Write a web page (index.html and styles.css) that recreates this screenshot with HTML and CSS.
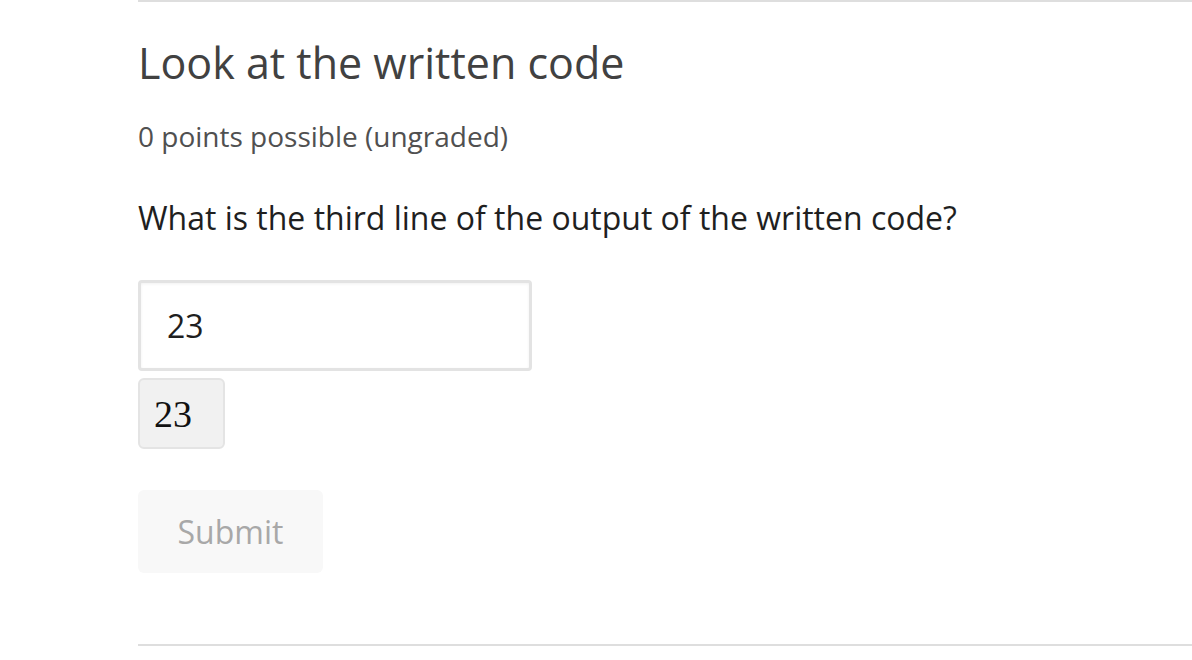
FILE: index.html
```html
<!DOCTYPE html>
<html lang="en">
<head>
<meta charset="utf-8">
<title>Problem</title>
<link rel="stylesheet" href="styles.css">
</head>
<body>
<main class="problem">
  <h2 class="problem-title">Look at the written code</h2>
  <div class="points">0 points possible (ungraded)</div>
  <p class="question">What is the third line of the output of the written code?</p>
  <div class="answer">
    <input class="answer-input" type="text" value="23">
    <div class="preview"><span class="math">23</span></div>
  </div>
  <div class="actions">
    <button class="submit" type="button" disabled>Submit</button>
  </div>
</main>
</body>
</html>
```
FILE: styles.css
```css
html, body {
  margin: 0;
  padding: 0;
  background: #fff;
}
body {
  font-family: "Open Sans", "Liberation Sans", sans-serif;
  overflow: hidden;
}
.problem {
  margin-left: 138px;
  border-top: 2px solid #dedede;
  border-bottom: 2px solid #dedede;
  height: 642px;
  box-sizing: content-box;
  display: flex;
  flex-direction: column;
  align-items: flex-start;
}
.problem-title {
  margin: 33px 0 0 0;
  font-size: 43px;
  font-weight: 400;
  line-height: 56px;
  color: #414141;
}
.points {
  margin-top: 27px;
  font-size: 28px;
  line-height: 36px;
  color: #505050;
}
.question {
  margin: 44px 0 0 0;
  font-size: 32px;
  line-height: 40px;
  color: #1f1f1f;
}
.answer {
  margin-top: 42px;
  display: flex;
  flex-direction: column;
  align-items: flex-start;
  gap: 7px;
}
.answer-input {
  width: 394px;
  height: 91px;
  box-sizing: border-box;
  border: 3px solid #e3e3e3;
  border-radius: 4px;
  box-shadow: inset 0 1px 3px rgba(0,0,0,0.06);
  padding: 0 26px;
  font-family: "Open Sans", "Liberation Sans", sans-serif;
  font-size: 32px;
  color: #1f1f1f;
  background: #fff;
  outline: none;
}
.preview {
  width: 87px;
  height: 71px;
  box-sizing: border-box;
  border: 2px solid #e4e4e4;
  border-radius: 6px;
  background: #f1f1f1;
  display: flex;
  align-items: center;
  padding-left: 14px;
}
.math {
  font-family: "Liberation Serif", "DejaVu Serif", serif;
  font-size: 38px;
  color: #111;
}
.actions {
  margin-top: 41px;
}
.submit {
  width: 185px;
  height: 83px;
  border: none;
  border-radius: 6px;
  background: #f8f8f8;
  color: #a8a8a8;
  font-family: "Open Sans", "Liberation Sans", sans-serif;
  font-size: 32px;
  padding: 0;
}
```
